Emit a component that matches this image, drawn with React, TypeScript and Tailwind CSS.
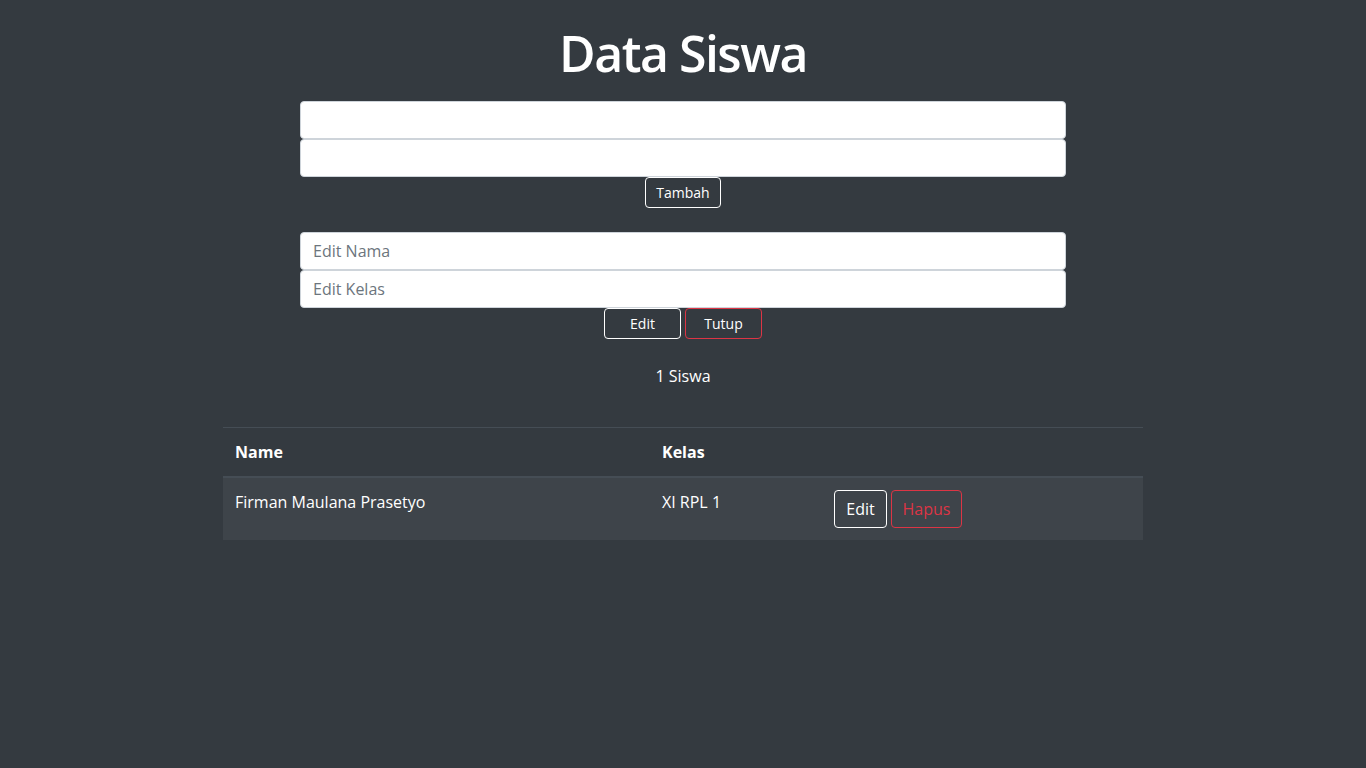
export default function App() {
  const font = { fontFamily: '"Open Sans", "Noto Sans", sans-serif' };
  return (
    <div className="min-h-[768px] bg-[#343a40] text-white" style={font}>
      <div className="flex flex-col items-center pt-[24px]">
        <h1 className="text-[50px] leading-[58px] font-semibold tracking-[-1.5px] mb-[19px]">Data Siswa</h1>
        <div className="w-[766px] flex flex-col items-center">
          <input className="w-full h-[38px] bg-white border border-[#ced4da] rounded-[4px] px-3 text-[16px] text-[#495057] outline-none" />
          <input className="w-full h-[38px] bg-white border border-[#ced4da] rounded-[4px] px-3 text-[16px] text-[#495057] outline-none" />
          <button className="h-[31px] w-[76px] border border-white rounded-[4px] text-[14px] text-white">Tambah</button>
        </div>
        <div className="w-[766px] flex flex-col items-center mt-[24px]">
          <input placeholder="Edit Nama" className="w-full h-[38px] bg-white border border-[#ced4da] rounded-[4px] px-3 text-[16px] text-[#495057] placeholder:text-[#6c757d] outline-none" />
          <input placeholder="Edit Kelas" className="w-full h-[38px] bg-white border border-[#ced4da] rounded-[4px] px-3 text-[16px] text-[#495057] placeholder:text-[#6c757d] outline-none" />
          <div className="flex gap-[4px]">
            <button className="h-[31px] w-[77px] border border-white rounded-[4px] text-[14px] text-white">Edit</button>
            <button className="h-[31px] w-[77px] border border-[#dc3545] rounded-[4px] text-[14px] text-white">Tutup</button>
          </div>
        </div>
        <p className="mt-[25px] text-[16px] leading-[24px]">1 Siswa</p>
        <div className="w-[920px] mt-[39px] border-t border-[#454d55]">
          <div className="flex h-[50px] items-start border-b-2 border-[#454d55] font-bold text-[16px] leading-[24px]">
            <div className="w-[427px] px-3 py-3">Name</div>
            <div className="w-[172px] px-3 py-3">Kelas</div>
            <div className="flex-1 px-3 py-3"></div>
          </div>
          <div className="flex bg-[#3e444a] text-[16px] leading-[24px]">
            <div className="w-[427px] px-3 py-3">Firman Maulana Prasetyo</div>
            <div className="w-[172px] px-3 py-3">XI RPL 1</div>
            <div className="flex-1 px-3 py-3 flex gap-[4px]">
              <button className="h-[38px] w-[53px] border border-white rounded-[4px] text-[16px] text-white">Edit</button>
              <button className="h-[38px] w-[71px] border border-[#dc3545] rounded-[4px] text-[16px] text-[#dc3545]">Hapus</button>
            </div>
          </div>
        </div>
      </div>
    </div>
  );
}
